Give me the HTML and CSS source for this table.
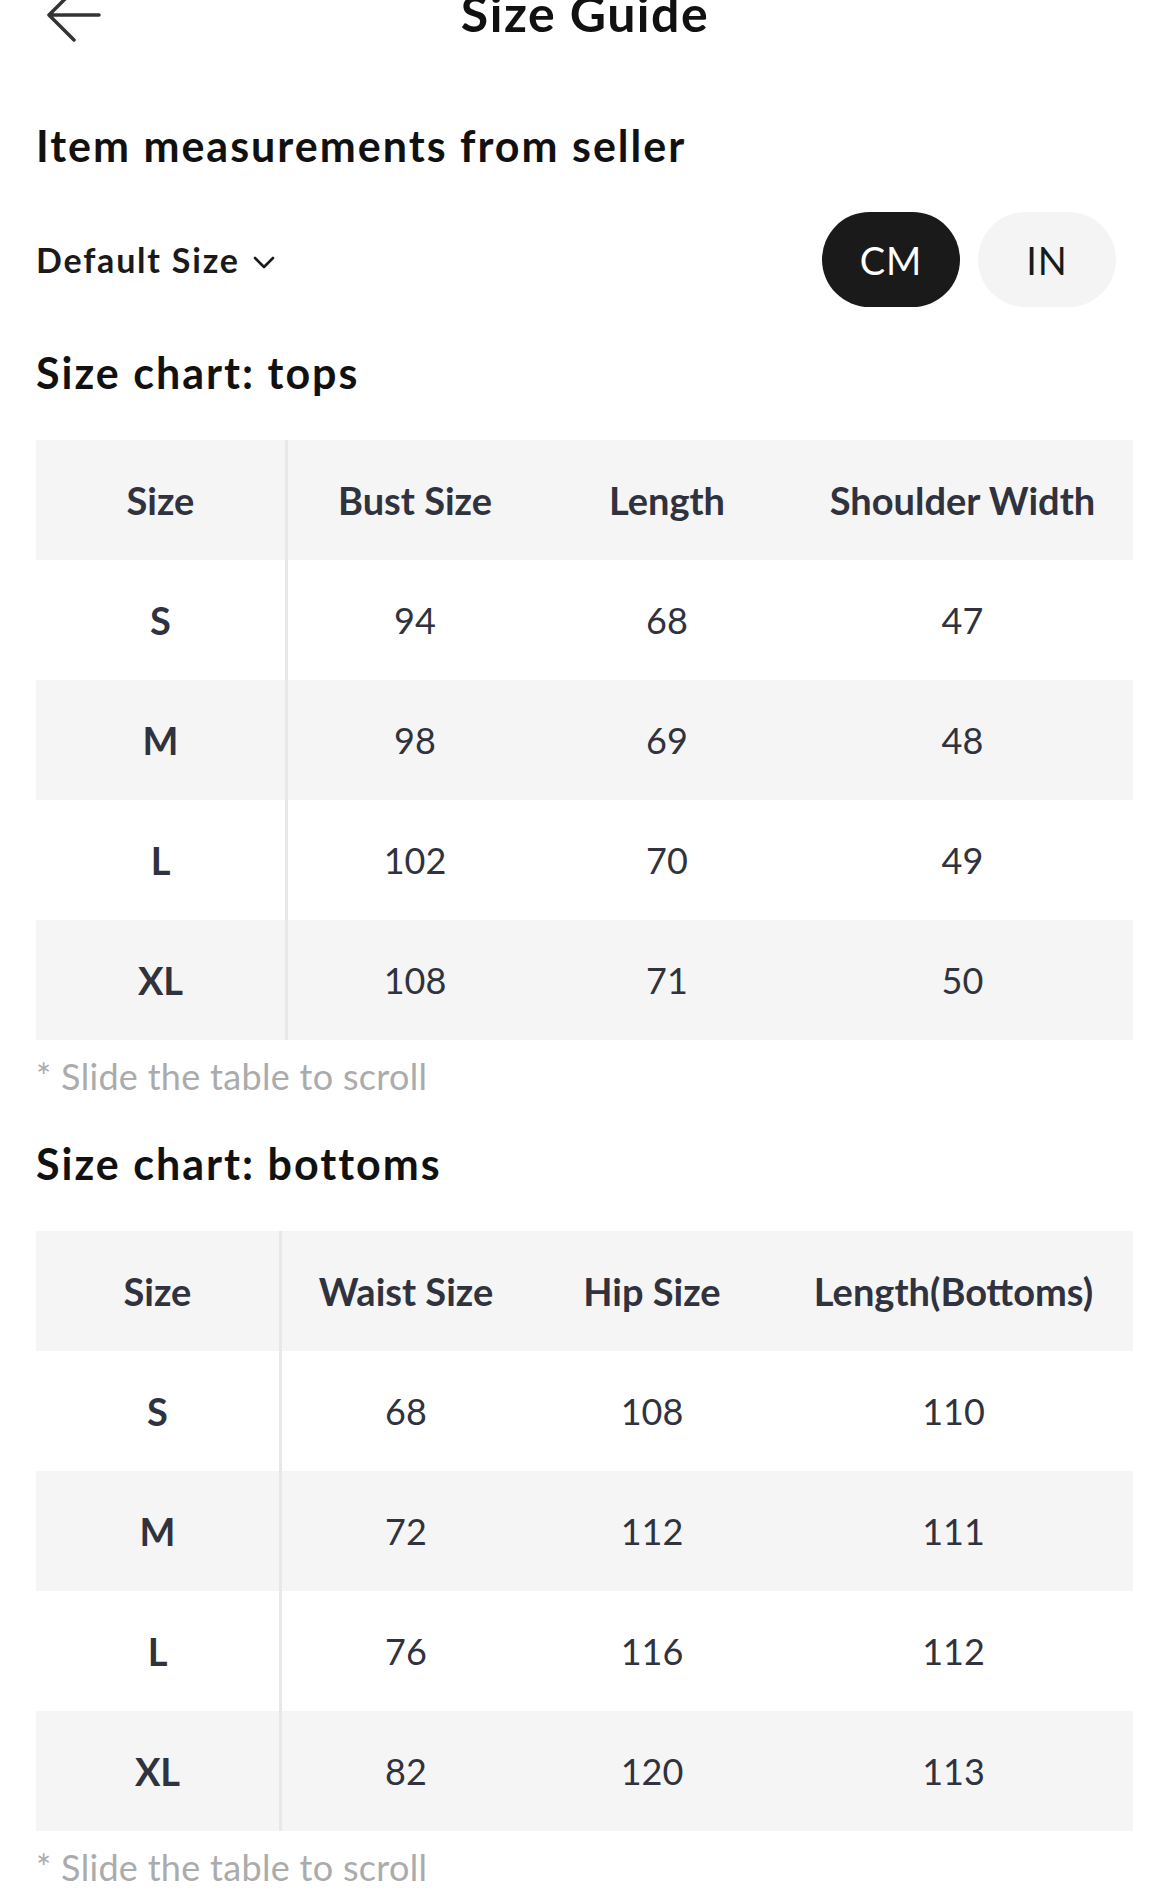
FILE: index.html
```html
<!DOCTYPE html>
<html lang="en">
<head>
<meta charset="utf-8">
<title>Size Guide</title>
<link rel="stylesheet" href="styles.css">
</head>
<body>
<div class="page">
  <header class="topbar">
    <button class="back" aria-label="Back">
      <svg width="60" height="50" viewBox="0 0 60 50"><path d="M29 2 L4 27 L29 52 M4 27 H54" fill="none" stroke="#333" stroke-width="3.5" stroke-linecap="round" stroke-linejoin="round"/></svg>
    </button>
    <h1 class="title">Size Guide</h1>
    <span class="spacer"></span>
  </header>

  <h2 class="section-title first">Item measurements from seller</h2>

  <div class="controls">
    <div class="size-select">Default Size
      <svg class="chev" width="24" height="24" viewBox="0 0 24 24"><path d="M3 8 L12 17 L21 8" fill="none" stroke="#1a1a1a" stroke-width="2.6" stroke-linecap="round" stroke-linejoin="round"/></svg>
    </div>
    <div class="units">
      <span class="unit active">CM</span>
      <span class="unit">IN</span>
    </div>
  </div>

  <h2 class="section-title">Size chart: tops</h2>
  <div class="chart tops">
    <div class="row head"><div class="c first">Size</div><div class="c">Bust Size</div><div class="c">Length</div><div class="c">Shoulder Width</div></div>
    <div class="row"><div class="c first">S</div><div class="c">94</div><div class="c">68</div><div class="c">47</div></div>
    <div class="row alt"><div class="c first">M</div><div class="c">98</div><div class="c">69</div><div class="c">48</div></div>
    <div class="row"><div class="c first">L</div><div class="c">102</div><div class="c">70</div><div class="c">49</div></div>
    <div class="row alt"><div class="c first">XL</div><div class="c">108</div><div class="c">71</div><div class="c">50</div></div>
  </div>
  <p class="note">* Slide the table to scroll</p>

  <h2 class="section-title">Size chart: bottoms</h2>
  <div class="chart bottoms">
    <div class="row head"><div class="c first">Size</div><div class="c">Waist Size</div><div class="c">Hip Size</div><div class="c">Length(Bottoms)</div></div>
    <div class="row"><div class="c first">S</div><div class="c">68</div><div class="c">108</div><div class="c">110</div></div>
    <div class="row alt"><div class="c first">M</div><div class="c">72</div><div class="c">112</div><div class="c">111</div></div>
    <div class="row"><div class="c first">L</div><div class="c">76</div><div class="c">116</div><div class="c">112</div></div>
    <div class="row alt"><div class="c first">XL</div><div class="c">82</div><div class="c">120</div><div class="c">113</div></div>
  </div>
  <p class="note">* Slide the table to scroll</p>
</div>
</body>
</html>
```

FILE: styles.css
```css
* { box-sizing: border-box; }
html, body { margin: 0; padding: 0; background: #fff; }
body { font-family: Lato, "Noto Sans", sans-serif; color: #111; }

.page { padding: 0 37px 0 36px; }

.topbar {
  display: grid;
  grid-template-columns: 60px 1fr 60px;
  align-items: start;
  height: 50px;
  margin: -12px -37px 0 -36px;
  padding: 0 45px;
}
.back { border: 0; background: none; padding: 0; display: block; }
.back svg { display: block; overflow: visible; }
.title {
  margin: 0;
  text-align: center;
  font-size: 50px;
  font-weight: 700;
  line-height: 50px;
  color: #111;
  letter-spacing: 1.5px;
}

.section-title {
  margin: 0;
  font-size: 43px;
  font-weight: 700;
  line-height: 48px;
  letter-spacing: 2px;
  color: #111;
}
.section-title.first { margin-top: 84px; }

.controls {
  display: flex;
  align-items: center;
  justify-content: space-between;
  margin-top: 42px;
  padding-right: 17px;
}
.size-select {
  display: flex;
  align-items: center;
  gap: 12px;
  font-size: 34px;
  font-weight: 700;
  letter-spacing: 1.8px;
  color: #1a1a1a;
}
.chev { margin-top: 4px; }
.units { display: flex; gap: 18px; }
.unit {
  width: 138px;
  height: 95px;
  border-radius: 48px;
  background: #f4f4f4;
  color: #1a1a1a;
  display: flex;
  align-items: center;
  justify-content: center;
  font-size: 38px;
  font-weight: 400;
  letter-spacing: 1px;
}
.unit.active { background: #1a1a1a; color: #fff; }

.controls + .section-title { margin-top: 42px; }

.chart { margin-top: 43px; }
.row {
  display: grid;
  height: 120px;
  align-items: center;
  font-size: 36px;
  color: #30323e;
}
.tops .row { grid-template-columns: 252px 254px 250px 1fr; }
.bottoms .row { grid-template-columns: 246px 248px 244px 1fr; }
.row.head, .row.alt { background: #f5f5f5; }
.row.head .c { font-weight: 700; font-size: 38px; }
.c { text-align: center; height: 100%; display: flex; align-items: center; justify-content: center; }
.c.first { font-weight: 700; font-size: 38px; border-right: 3px solid #e8e8e8; }

.note {
  margin: 16px 0 0;
  font-size: 36px;
  line-height: 40px;
  letter-spacing: 0.3px;
  color: #ababab;
}
.note + .section-title { margin-top: 44px; }
```
